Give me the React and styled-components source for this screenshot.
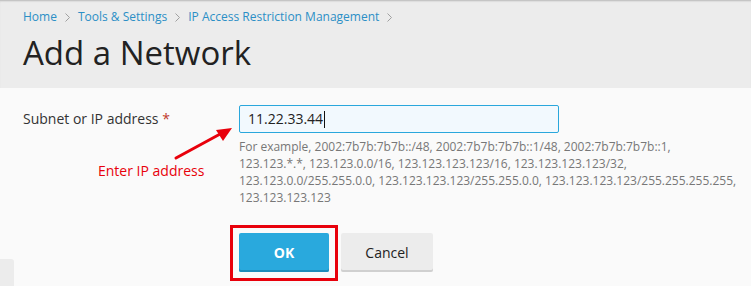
import React from "react";
import styled, { createGlobalStyle } from "styled-components";

const Global = createGlobalStyle`
  html, body { margin: 0; padding: 0; }
  body {
    background: #fafafa;
    font-family: "Open Sans", "Liberation Sans", sans-serif;
    color: #222;
    overflow: hidden;
  }
`;

const Page = styled.div`
  position: relative;
  width: 751px;
  height: 286px;
  overflow: hidden;
`;

const Header = styled.header`
  background: #ececec;
  height: 88px;
  box-sizing: border-box;
  padding: 8px 23px 0;
  box-shadow: inset 0 2px 2px -1px #b8b8b8;
`;

const Crumbs = styled.nav`
  display: flex;
  align-items: center;
  font-size: 12px;
  line-height: 18px;
  color: #2b8fc6;
`;

const Crumb = styled.span`
  color: #2b8fc6;
`;

const Chevron = styled.svg`
  display: block;
  margin: 1px 8px 0 8px;
`;

const Sep = () => (
  <Chevron width="5" height="9" viewBox="0 0 5 9">
    <polyline points="0.5,0.5 4.5,4.5 0.5,8.5" fill="none" stroke="#a0a0a0" strokeWidth="1" />
  </Chevron>
);

const Title = styled.h1`
  margin: 6px 0 0;
  font-size: 33px;
  font-weight: 400;
  line-height: 42px;
  color: #222;
`;

const Content = styled.main`
  position: relative;
  padding: 17px 23px 0;
`;

const Row = styled.div`
  display: grid;
  grid-template-columns: 216px 1fr;
`;

const Label = styled.label`
  font-size: 14px;
  line-height: 20px;
  padding-top: 4px;
  color: #333;
`;

const Req = styled.span`
  color: #c0392b;
`;

const Field = styled.div`
  display: flex;
  flex-direction: column;
`;

const Input = styled.div`
  box-sizing: border-box;
  width: 320px;
  height: 28px;
  border: 1px solid #2aa7dc;
  border-radius: 2px;
  background: #f2f9fe;
  padding: 0 8px;
  font-size: 14px;
  line-height: 26px;
  color: #222;
  display: flex;
  align-items: center;
`;

const Caret = styled.span`
  display: inline-block;
  width: 1px;
  height: 17px;
  background: #111;
  margin-left: 1px;
`;

const Hint = styled.div`
  margin-top: 5px;
  font-size: 12px;
  line-height: 17px;
  color: #777;
  width: 500px;
`;

const Buttons = styled.div`
  display: flex;
  gap: 12px;
  margin: 27px 0 0 216px;
`;

const Highlight = styled.div`
  position: relative;
`;

const Frame = styled.div`
  position: absolute;
  left: -9px;
  right: -9px;
  top: -8px;
  bottom: -9px;
  border: 3px solid #e8000b;
  pointer-events: none;
`;

const Button = styled.button`
  box-sizing: border-box;
  width: ${(p) => (p.$primary ? "90px" : "92px")};
  height: 39px;
  border: none;
  border-radius: 2px;
  font-family: inherit;
  font-size: 14px;
  font-weight: ${(p) => (p.$primary ? 700 : 400)};
  color: ${(p) => (p.$primary ? "#fff" : "#222")};
  background: ${(p) => (p.$primary ? "#29a9dd" : "#ececec")};
  box-shadow: ${(p) =>
    p.$primary ? "inset 0 -2px 0 #1e8cba" : "inset 0 -2px 0 #d0d0d0"};
  padding: 0;
`;

const Note = styled.div`
  position: absolute;
  left: 98px;
  top: 73px;
  font-size: 14px;
  line-height: 20px;
  color: #e8000b;
`;

const Arrow = styled.svg`
  position: absolute;
  left: 170px;
  top: 120px;
`;

const SideTab = styled.div`
  position: absolute;
  left: 0;
  top: 259px;
  width: 14px;
  height: 40px;
  background: #ececec;
  border-top-right-radius: 3px;
`;

export default function App() {
  return (
    <Page>
      <Global />
      <Header>
        <Crumbs>
          <Crumb>Home</Crumb>
          <Sep />
          <Crumb>Tools &amp; Settings</Crumb>
          <Sep />
          <Crumb>IP Access Restriction Management</Crumb>
          <Sep />
        </Crumbs>
        <Title>Add a Network</Title>
      </Header>
      <Content>
        <Row>
          <Label>
            Subnet or IP address <Req>*</Req>
          </Label>
          <Field>
            <Input>
              11.22.33.44
              <Caret />
            </Input>
            <Hint>
              For example, 2002:7b7b:7b7b::/48, 2002:7b7b:7b7b::1/48, 2002:7b7b:7b7b::1,
              <br />
              123.123.*.*, 123.123.0.0/16, 123.123.123.123/16, 123.123.123.123/32,
              <br />
              123.123.0.0/255.255.0.0, 123.123.123.123/255.255.0.0, 123.123.123.123/255.255.255.255,
              <br />
              123.123.123.123
            </Hint>
          </Field>
        </Row>
        <Buttons>
          <Highlight>
            <Button $primary>OK</Button>
            <Frame />
          </Highlight>
          <Button>Cancel</Button>
        </Buttons>
        <Note>Enter IP address</Note>
      </Content>
      <Arrow width="70" height="45" viewBox="0 0 70 45">
        <line x1="6" y1="38" x2="52" y2="13" stroke="#e8000b" strokeWidth="3" strokeLinecap="round" />
        <polygon points="62,8 46,10 53,21" fill="#e8000b" />
      </Arrow>
      <SideTab />
    </Page>
  );
}
